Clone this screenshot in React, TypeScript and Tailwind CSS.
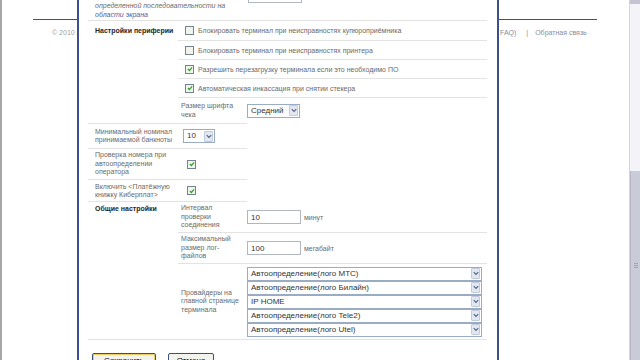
import type { ReactNode } from "react"

const checkRows = [
  { label: "Блокировать терминал при неисправностях купюроприёмника", checked: false },
  { label: "Блокировать терминал при неисправностях принтера", checked: false },
  { label: "Разрешить перезагрузку терминала если это необходимо ПО", checked: true },
  { label: "Автоматическая инкассация при снятии стекера", checked: true },
]

const providers = [
  "Автоопределение(лого МТС)",
  "Автоопределение(лого Билайн)",
  "IP HOME",
  "Автоопределение(лого Tele2)",
  "Автоопределение(лого Utel)",
]

function Chevron() {
  return (
    <svg viewBox="0 0 8 6" className="h-[5px] w-[6px]">
      <path d="M1 1.2 L4 4.2 L7 1.2" stroke="#4d6185" strokeWidth="1.5" fill="none" />
    </svg>
  )
}

function Select({ value, className }: { value: string; className: string }) {
  return (
    <div className={`flex h-[14px] shrink-0 items-center border border-[#9aabc4] bg-white ${className}`}>
      <span className="flex-1 truncate pl-[3px] text-[8px] leading-[12px] text-[#333]">{value}</span>
      <span className="mr-px flex h-[11px] w-[9px] items-center justify-center rounded-[1px] border border-[#c2cbdc] bg-[#e2e7f1]">
        <Chevron />
      </span>
    </div>
  )
}

function Check({ checked }: { checked: boolean }) {
  return (
    <span className="flex h-[9px] w-[9px] shrink-0 items-center justify-center border border-[#75838f] bg-[#f3f3ee]">
      {checked && (
        <svg viewBox="0 0 8 8" className="h-[6px] w-[6px]">
          <path d="M1.2 4 L3.2 6 L6.8 1.8" stroke="#2aa52a" strokeWidth="1.6" fill="none" />
        </svg>
      )}
    </span>
  )
}

function Input({ value }: { value: string }) {
  return (
    <div className="flex h-[14px] w-[54px] shrink-0 items-center border border-[#b0b7c0] bg-white pl-[3px] text-[8px] text-[#333]">
      {value}
    </div>
  )
}

function SubLabel({ children }: { children: ReactNode }) {
  return <div className="w-[69px] shrink-0 pl-[3px] leading-[8.5px]">{children}</div>
}

export default function App() {
  return (
    <div className="flex h-[360px] w-[640px] overflow-hidden bg-white font-['Liberation_Sans',Arial,sans-serif] text-[7px] leading-[9px] text-[#6a6a6a]">
      {/* page behind the dialog, left side */}
      <div className="flex w-[77px] shrink-0 flex-col border-l-[2px] border-[#a5a5a5]">
        <div className="ml-[31px] mt-[19px] h-px bg-[#3d4f8f]" />
        <div className="ml-[50px] mt-[8px] overflow-hidden whitespace-nowrap text-[#a0a0a0]">© 2010 г.</div>
      </div>

      {/* dialog */}
      <div className="flex w-[422px] shrink-0 flex-col border-x-2 border-[#3d4f8f] pl-[9px] pr-[10px]">
        <div className="flex h-[21px] shrink-0 border-b border-[#e3e3e3]">
          <div className="w-[160px] shrink-0 pl-[7px] pt-[1px] italic">
            <div>определенной последовательности на</div>
            <div className="text-[#4565a8]">области экрана</div>
          </div>
          <div>
            <div className="-mt-[11px] h-[14px] w-[54px] border border-[#b0b7c0]" />
          </div>
        </div>

        {/* Настройки периферии */}
        <div className="flex shrink-0">
          <div className="w-[90px] shrink-0 pl-[7px] pt-[5px] font-bold text-[#262626]">Настройки периферии</div>
          <div className="flex-1">
            {checkRows.map((row, i) => (
              <div
                key={row.label}
                className={`flex items-center gap-[4px] border-b border-[#e3e3e3] pl-[7px] ${i === 0 ? "h-[20px]" : "h-[19px]"}`}
              >
                <Check checked={row.checked} />
                <span className="whitespace-nowrap">{row.label}</span>
              </div>
            ))}
            <div className="flex h-[25px] items-center">
              <SubLabel>
                Размер шрифта
                <br />
                чека
              </SubLabel>
              <Select value="Средний" className="w-[53px]" />
            </div>
          </div>
        </div>

        <div className="w-[159px] shrink-0 border-t border-[#e3e3e3]">
          <div className="flex h-[25px] items-center border-b border-[#e3e3e3]">
            <div className="w-[90px] shrink-0 pl-[7px] leading-[8.5px]">
              Минимальный номинал
              <br />
              принимаемой банкноты
            </div>
            <Select value="10" className="ml-[5px] w-[32px]" />
          </div>
          <div className="flex h-[31px] items-center border-b border-[#e3e3e3]">
            <div className="w-[90px] shrink-0 pl-[7px] leading-[8.5px]">
              Проверка номера при
              <br />
              автоопределении
              <br />
              оператора
            </div>
            <span className="ml-[9px]">
              <Check checked />
            </span>
          </div>
          <div className="flex h-[22px] items-center border-b border-[#e3e3e3]">
            <div className="w-[90px] shrink-0 pl-[7px] leading-[8px]">
              Включить &lt;Платёжную
              <br />
              книжку Киберплат&gt;
            </div>
            <span className="ml-[9px]">
              <Check checked />
            </span>
          </div>
        </div>

        {/* Общие настройки */}
        <div className="flex shrink-0 border-b border-[#e3e3e3]">
          <div className="w-[90px] shrink-0 pl-[7px] pt-[2px] font-bold text-[#262626]">Общие настройки</div>
          <div className="flex-1">
            <div className="flex h-[31px] items-center border-b border-[#e3e3e3]">
              <SubLabel>
                Интервал
                <br />
                проверки
                <br />
                соединения
              </SubLabel>
              <Input value="10" />
              <span className="ml-[3px]">минут</span>
            </div>
            <div className="flex h-[31px] items-center border-b border-[#e3e3e3]">
              <SubLabel>
                Максимальный
                <br />
                размер лог-
                <br />
                файлов
              </SubLabel>
              <Input value="100" />
              <span className="ml-[3px]">мегабайт</span>
            </div>
            <div className="flex h-[75px] items-center">
              <SubLabel>
                Провайдеры на
                <br />
                главной странице
                <br />
                терминала
              </SubLabel>
              <div className="flex w-[235px] flex-col">
                {providers.map((p, i) => (
                  <Select key={i} value={p} className="w-full" />
                ))}
              </div>
            </div>
          </div>
        </div>

        <div className="flex shrink-0 gap-[12px] pl-[4px] pt-[13px]">
          <button className="flex h-[17px] w-[64px] items-start justify-center rounded-[2px] border border-[#3a5277] bg-[#f3f3ee] pt-[2px] text-[8px] leading-[10px] text-black shadow-[inset_0_0_0_1px_#f0c860]">
            Сохранить
          </button>
          <button className="flex h-[17px] w-[46px] items-start justify-center rounded-[2px] border border-[#3a5277] bg-[#f3f3ee] pt-[2px] text-[8px] leading-[10px] text-black">
            Отмена
          </button>
        </div>
      </div>

      {/* page behind the dialog, right side */}
      <div className="flex w-[130px] shrink-0 flex-col">
        <div className="mt-[19px] h-px w-[98px] bg-[#3d4f8f]" />
        <div className="mt-[8px] flex whitespace-nowrap pl-px text-[#8c8c98]">
          <span>FAQ)</span>
          <span className="ml-[10px]">|</span>
          <span className="ml-[7px]">Обратная связь</span>
        </div>
      </div>

      {/* scrollbar */}
      <div className="flex w-[11px] shrink-0 flex-col border-l border-[#d4d4dc]">
        <div className="h-[4px] bg-[#c4c4d0]" />
        <div className="h-[167px] bg-[#f4f4f8]" />
        <div className="flex flex-1 items-center justify-center border-l border-[#b8b8c8] bg-[#cacbd8]">
          <div className="flex flex-col gap-px">
            <div className="h-px w-[4px] bg-[#a4a4b4]" />
            <div className="h-px w-[4px] bg-[#a4a4b4]" />
            <div className="h-px w-[4px] bg-[#a4a4b4]" />
          </div>
        </div>
      </div>
    </div>
  )
}
